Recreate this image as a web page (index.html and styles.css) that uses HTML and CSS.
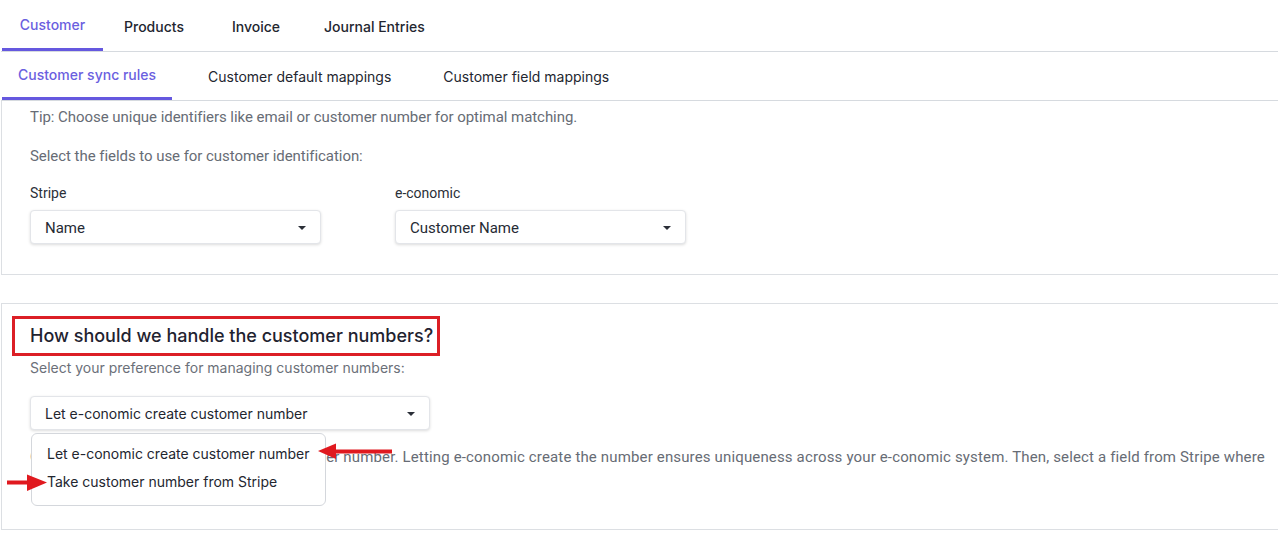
FILE: index.html
```html
<!DOCTYPE html>
<html lang="en">
<head>
    <meta charset="UTF-8">
    <meta name="viewport" content="width=device-width, initial-scale=1.0">
    <title>Customer sync rules</title>
    <link rel="stylesheet" href="styles.css">
</head>
<body>
    <div class="page">
        <div class="tabs">
            <a class="tab active">Customer</a>
            <a class="tab">Products</a>
            <a class="tab">Invoice</a>
            <a class="tab">Journal Entries</a>
        </div>

        <div class="subtabs">
            <a class="subtab active">Customer sync rules</a>
            <a class="subtab">Customer default mappings</a>
            <a class="subtab">Customer field mappings</a>
        </div>

        <div class="card first">
            <p class="tip">Tip: Choose unique identifiers like email or customer number for optimal matching.</p>
            <p class="tip">Select the fields to use for customer identification:</p>

            <div class="fields">
                <div class="field">
                    <label>Stripe</label>
                    <div class="select">
                        <span>Name</span>
                        <span class="caret"></span>
                    </div>
                </div>
                <div class="field">
                    <label>e-conomic</label>
                    <div class="select">
                        <span>Customer Name</span>
                        <span class="caret"></span>
                    </div>
                </div>
            </div>
        </div>

        <div class="card second">
            <h2 class="heading"><span class="marked">How should we handle the customer numbers?</span></h2>
            <p class="subtitle">Select your preference for managing customer numbers:</p>

            <div class="select-wrap">
                <div class="select wide">
                    <span>Let e-conomic create customer number</span>
                    <span class="caret"></span>
                </div>
                <div class="menu">
                    <div class="menu-item">Let e-conomic create customer number</div>
                    <div class="menu-item">Take customer number from Stripe</div>
                </div>
                <!-- annotation arrows -->
                <svg class="arrow arrow-left" width="74" height="18" viewBox="0 0 74 18">
                    <rect x="16" y="6.5" width="58" height="4" fill="#e0191f"/>
                    <polygon points="0,8 18,0.5 18,16" fill="#e0191f"/>
                </svg>
                <svg class="arrow arrow-right" width="40" height="18" viewBox="0 0 40 18">
                    <rect x="0" y="6.5" width="22" height="4" fill="#e0191f"/>
                    <polygon points="40,8.5 20,0.5 20,17" fill="#e0191f"/>
                </svg>
            </div>

            <p class="desc">Choose how you want to assign the customer number. Letting e-conomic create the number ensures uniqueness across your e-conomic system. Then, select a field from Stripe where the number is kept.</p>
        </div>
    </div>
</body>
</html>
```

FILE: styles.css
```css
body {
    margin: 0;
    padding: 0;
    background-color: #fff;
    font-family: Inter, "Noto Sans", sans-serif;
    color: #1f2330;
    overflow: hidden;
}

.page {
    width: 1320px;
    padding-left: 1px;
}

/* Tabs */
.tabs {
    display: flex;
    height: 51px;
    padding-left: 1px;
    border-bottom: 1px solid #d6dadf;
}

.tab {
    min-width: 102px;
    padding: 1px 17px 0;
    box-sizing: border-box;
    display: flex;
    align-items: center;
    justify-content: center;
    font-size: 14px;
    font-weight: 500;
    color: #23262f;
}

.tab.active {
    color: #6b5fe0;
    border-bottom: 3px solid #6558df;
    padding-top: 0;
    min-width: 101px;
}

.subtabs {
    display: flex;
    gap: 20px;
    height: 48px;
    padding-left: 1px;
    border-bottom: 1px solid #d6dadf;
}

.subtab {
    padding: 0 16px;
    display: flex;
    align-items: center;
    font-size: 14px;
    font-weight: 400;
    color: #23262f;
}

.subtab.active {
    font-weight: 500;
    color: #6b5fe0;
    border-bottom: 3px solid #6558df;
    height: 45px;
}

/* Cards */
.card {
    border: 1px solid #dcdfe3;
    border-right: none;
    padding: 0 28px;
}

.card.first {
    border-top: none;
    padding-top: 6px;
    padding-bottom: 30px;
}

.card.second {
    margin-top: 28px;
    padding-top: 12px;
    padding-bottom: 30px;
}

.tip {
    margin: 0 0 19px;
    font-family: Roboto, sans-serif;
    font-size: 15px;
    line-height: 20px;
    color: #676c75;
    letter-spacing: -0.05px;
}

.fields {
    display: flex;
    gap: 74px;
    margin-top: -2px;
}

.field label {
    display: block;
    font-family: Roboto, sans-serif;
    font-size: 14px;
    line-height: 20px;
    color: #2b2f38;
    margin-bottom: 7px;
}

.select {
    width: 291px;
    height: 34px;
    box-sizing: border-box;
    border: 1px solid #e3e5e9;
    border-radius: 4px;
    box-shadow: 0 1px 3px rgba(0, 0, 0, 0.14);
    display: flex;
    align-items: center;
    justify-content: space-between;
    padding: 1px 14px 0 14px;
    font-family: Roboto, sans-serif;
    font-size: 15px;
    color: #262b35;
    background-color: #fff;
}

.caret {
    width: 0;
    height: 0;
    border-left: 4px solid transparent;
    border-right: 4px solid transparent;
    border-top: 4px solid #2b2f38;
}

.heading {
    margin: 0;
    font-size: 18px;
    font-weight: 500;
    line-height: 24px;
}

.marked {
    display: inline-block;
    margin-left: -18px;
    padding: 5px 4px 5px 15px;
    border: 3px solid #dc1f26;
}

.subtitle {
    margin: 2px 0 0;
    font-size: 14px;
    line-height: 20px;
    color: #6b7079;
}

.select-wrap {
    position: relative;
    margin-top: 18px;
}

.select.wide {
    width: 400px;
    font-family: Inter, sans-serif;
    font-size: 14px;
    color: #23262f;
}

.menu {
    position: absolute;
    top: 37px;
    left: 1px;
    width: 295px;
    box-sizing: border-box;
    padding: 6px 0 9px;
    background-color: #fff;
    border: 1px solid #d4d7dc;
    border-radius: 6px;
    z-index: 2;
}

.menu-item {
    padding: 0 15px;
    white-space: nowrap;
    font-size: 14px;
    line-height: 28px;
    color: #23262f;
}

.arrow {
    position: absolute;
    z-index: 3;
}

.arrow-left {
    top: 47px;
    left: 288px;
}

.arrow-right {
    top: 78px;
    left: -23px;
}

.desc {
    margin: 13px 0 0;
    width: 1238px;
    font-family: Roboto, sans-serif;
    font-size: 15px;
    line-height: 28px;
    color: #676c75;
    letter-spacing: 0.15px;
}
```
